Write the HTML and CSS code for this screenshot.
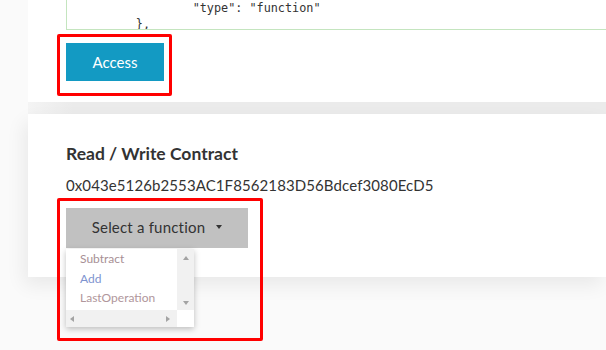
FILE: index.html
```html
<!DOCTYPE html>
<html lang="en">
<head>
  <meta charset="UTF-8" />
  <meta name="viewport" content="width=device-width, initial-scale=1.0" />
  <title>Contract Access</title>
  <link rel="stylesheet" href="styles.css">
</head>
<body>
  <div class="page">
    <section class="card card-abi">
<pre class="code">                "stateMutability": "view",
                "type": "function"
        },
        {</pre>
      <div class="mark-wrap">
        <button class="btn-access">Access</button>
        <span class="mark mark-access"></span>
      </div>
    </section>

    <div class="divider"></div>

    <section class="card card-contract">
      <h2>Read / Write Contract</h2>
      <p class="address">0x043e5126b2553AC1F8562183D56Bdcef3080EcD5</p>
      <div class="select-wrap">
        <button class="btn-select">Select a function <span class="caret"></span></button>
        <div class="dropdown">
          <ul class="options">
            <li class="opt-sub">Subtract</li>
            <li class="opt-add">Add</li>
            <li class="opt-last">LastOperation</li>
          </ul>
          <div class="vscroll"><span class="arrow up"></span><span class="arrow down"></span></div>
          <div class="hscroll"><span class="arrow left"></span><span class="arrow right"></span></div>
          <div class="corner"></div>
        </div>
        <span class="mark mark-select"></span>
      </div>
    </section>
  </div>
</body>
</html>
```
FILE: styles.css
```css
/* Base */
* { box-sizing: border-box; }
body {
  margin: 0;
  background-color: #fafafa;
  font-family: Lato, 'Open Sans', sans-serif;
  color: #333;
}
.page {
  margin-left: 28px;
  height: 380px;
}

/* Cards */
.card {
  background-color: #fff;
}
.card-abi {
  margin-top: -30px;
  padding: 0 0 21px 38px;
  overflow: hidden;
}
.divider {
  height: 12px;
  background: linear-gradient(to right, #f4f4f4, #ebebeb 45px);
}
.card-contract {
  padding: 30px 0 29px 38px;
  box-shadow: -4px 8px 18px rgba(0,0,0,0.07);
}

/* ABI textarea */
.code {
  margin: 0;
  height: 60px;
  width: calc(100% + 20px);
  overflow: hidden;
  border: 1px solid #c4e5bf;
  padding: 13px 12px 0;
  font-family: 'DejaVu Sans Mono', 'Liberation Mono', monospace;
  font-size: 11.8px;
  line-height: 16px;
  color: #333;
}

.mark-wrap { position: relative; width: 98px; margin-top: 13px; }
.btn-access {
  display: block;
  width: 98px;
  height: 38px;
  border: none;
  background-color: #139ac3;
  color: #fff;
  font-family: Lato, sans-serif;
  font-size: 15px;
  padding: 0;
}

/* Highlight boxes */
.mark {
  position: absolute;
  border: 3px solid #ff0000;
  border-radius: 2px;
  pointer-events: none;
}
.mark-access { left: -9px; top: -9px; width: 115px; height: 62px; }
.mark-select { left: -9px; top: -10px; width: 206px; height: 143px; }

/* Contract */
h2 {
  margin: 0;
  font-size: 17.5px;
  font-weight: bold;
  line-height: 20px;
}
.address {
  margin: 11px 0 13px;
  font-size: 15px;
  letter-spacing: 0.1px;
  line-height: 20px;
}

.select-wrap { position: relative; width: 182px; }
.btn-select {
  display: flex;
  align-items: center;
  justify-content: center;
  gap: 11px;
  width: 182px;
  height: 40px;
  border: none;
  padding: 0 0 3px;
  background-color: #c1c1c1;
  color: #333;
  font-family: Lato, sans-serif;
  font-size: 15px;
  letter-spacing: 0.2px;
}
.caret {
  width: 0;
  height: 0;
  border-left: 3.5px solid transparent;
  border-right: 3.5px solid transparent;
  border-top: 4px solid #333;
}

/* Dropdown list */
.dropdown {
  position: absolute;
  left: 0;
  top: 41px;
  width: 128px;
  height: 78px;
  display: grid;
  grid-template-columns: 111px 17px;
  grid-template-rows: 61px 17px;
  background-color: #fff;
  box-shadow: 0 2px 6px rgba(0,0,0,0.25);
}
.options {
  list-style: none;
  margin: 0;
  padding: 0 0 0 14px;
  overflow: hidden;
  font-size: 12px;
  line-height: 19.5px;
  white-space: nowrap;
}
.opt-sub { color: #a78f95; }
.opt-add { color: #7d93cf; }
.opt-last { color: #b0969b; }

.vscroll, .hscroll { background-color: #f1f1f1; display: flex; }
.vscroll {
  flex-direction: column;
  align-items: center;
  justify-content: space-between;
  padding: 7px 0 5px;
}
.hscroll {
  align-items: center;
  justify-content: space-between;
  padding: 0 7px 0 4px;
}
.corner { background-color: #fff; }

.arrow { width: 0; height: 0; }
.arrow.up { border-left: 3.5px solid transparent; border-right: 3.5px solid transparent; border-bottom: 4px solid #a3a3a3; }
.arrow.down { border-left: 3.5px solid transparent; border-right: 3.5px solid transparent; border-top: 4px solid #a3a3a3; }
.arrow.left { border-top: 3.5px solid transparent; border-bottom: 3.5px solid transparent; border-right: 4px solid #a3a3a3; }
.arrow.right { border-top: 3.5px solid transparent; border-bottom: 3.5px solid transparent; border-left: 4px solid #a3a3a3; }
```
